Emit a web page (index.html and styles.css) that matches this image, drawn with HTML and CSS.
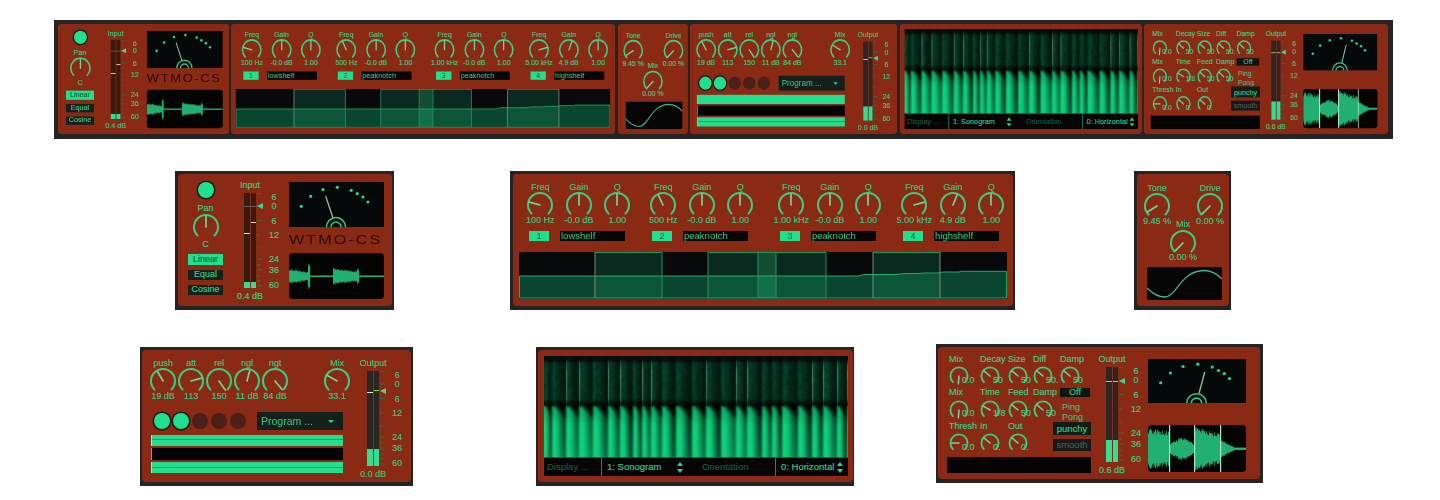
FILE: index.html
```html
<!DOCTYPE html>
<html lang="en">
<head>
<meta charset="utf-8">
<title>WTMO-CS channel strip</title>
<link rel="stylesheet" href="styles.css">
</head>
<body>
<svg class="defs" aria-hidden="true">
  <symbol id="arc" viewBox="0 0 28 28"><path d="M5.51 22.49A12 12 0 1 1 22.49 22.49"/></symbol>
  <symbol id="ticks" viewBox="0 0 10 95"><path d="M1 0.5h4M1 13h5M1 27.5h5M1 42h3M1 55h3M1 66h5M1 72h3M1 77h5M1 83h3M1 88h3M1 93h5"/></symbol>
  <symbol id="updown" viewBox="0 0 6 11"><path d="M3 0L6 4H0ZM3 11L0 7H6Z"/></symbol>
  <symbol id="vu" viewBox="0 0 95 45" preserveAspectRatio="none">
    <rect width="95" height="45"/>
    <g class="vu-dots"><circle cx="12.3" cy="24.3" r="1.6"/><circle cx="21.7" cy="14.3" r="1.6"/><circle cx="34" cy="7.7" r="1.6"/><circle cx="48.3" cy="5.3" r="1.6"/><circle cx="62.3" cy="8.3" r="1.6"/><circle cx="68.3" cy="11.7" r="1.6"/><circle cx="74" cy="15" r="1.6"/><circle cx="79" cy="20" r="1.6"/></g>
    <g class="vu-rings"><circle cx="47" cy="45" r="9.5"/><circle cx="47" cy="45" r="5"/></g>
  </symbol>
</svg>

<div class="strip"></div>

<div class="row row-mid">
  <section class="device dev-amp">
    <div class="panel p-amp" data-name="amp">
      <div class="amp-left">
        <span class="led on big"></span>
        <span class="lbl pan-lbl">Pan</span>
        <span class="pan-mark"></span>
        <svg class="knob" viewBox="0 0 28 28"><use href="#arc"/><line x1="14" y1="14" x2="14" y2="3"/></svg>
        <span class="val pan-val">C</span>
        <span class="btn active">Linear</span>
        <span class="btn">Equal</span>
        <span class="btn">Cosine</span>
      </div>
      <div class="meter meter-in">
        <span class="lbl">Input</span>
        <div class="meter-body">
          <div class="bars"><div class="bar"><i class="fill f-low"></i><i class="peak pk-in1"></i></div><div class="bar"><i class="fill f-low"></i><i class="peak pk-in2"></i></div><i class="zero"></i></div>
          <svg class="ticks"><use href="#ticks"/></svg>
          <span class="marker m-in"></span>
          <div class="scale"><span>6</span><span>0</span><span>6</span><span>12</span><span>24</span><span>36</span><span>60</span></div>
        </div>
        <span class="val">0.4 dB</span>
      </div>
      <div class="amp-right">
        <svg class="vu" viewBox="0 0 95 45"><use href="#vu"/><line x1="36.7" y1="14.3" x2="44" y2="36"/></svg>
        <span class="logo">WTMO-CS</span>
        <canvas class="wave" data-wave="1" width="95" height="46"></canvas>
      </div>
    </div>
  </section>

  <section class="device dev-eq">
    <div class="panel p-eq" data-name="eq">
      <div class="bands">
        <div class="band">
          <div class="knobs">
            <div class="kn"><span class="lbl">Freq</span><svg class="knob" viewBox="0 0 28 28"><use href="#arc"/><line x1="14" y1="14" x2="14" y2="3" transform="rotate(-75 14 14)"/></svg><span class="val">100 Hz</span></div>
            <div class="kn"><span class="lbl">Gain</span><svg class="knob" viewBox="0 0 28 28"><use href="#arc"/><line x1="14" y1="14" x2="14" y2="3"/></svg><span class="val">-0.0 dB</span></div>
            <div class="kn"><span class="lbl">Q</span><svg class="knob" viewBox="0 0 28 28"><use href="#arc"/><line x1="14" y1="14" x2="14" y2="3"/></svg><span class="val">1.00</span></div>
          </div>
          <div class="band-sel"><span class="num">1</span><span class="name">lowshelf</span></div>
        </div>
        <div class="band">
          <div class="knobs">
            <div class="kn"><span class="lbl">Freq</span><svg class="knob" viewBox="0 0 28 28"><use href="#arc"/><line x1="14" y1="14" x2="14" y2="3" transform="rotate(-25 14 14)"/></svg><span class="val">500 Hz</span></div>
            <div class="kn"><span class="lbl">Gain</span><svg class="knob" viewBox="0 0 28 28"><use href="#arc"/><line x1="14" y1="14" x2="14" y2="3"/></svg><span class="val">-0.0 dB</span></div>
            <div class="kn"><span class="lbl">Q</span><svg class="knob" viewBox="0 0 28 28"><use href="#arc"/><line x1="14" y1="14" x2="14" y2="3"/></svg><span class="val">1.00</span></div>
          </div>
          <div class="band-sel"><span class="num">2</span><span class="name">peaknotch</span></div>
        </div>
        <div class="band band-3">
          <div class="knobs">
            <div class="kn"><span class="lbl">Freq</span><svg class="knob" viewBox="0 0 28 28"><use href="#arc"/><line x1="14" y1="14" x2="14" y2="3"/></svg><span class="val">1.00 kHz</span></div>
            <div class="kn"><span class="lbl">Gain</span><svg class="knob" viewBox="0 0 28 28"><use href="#arc"/><line x1="14" y1="14" x2="14" y2="3"/></svg><span class="val">-0.0 dB</span></div>
            <div class="kn"><span class="lbl">Q</span><svg class="knob" viewBox="0 0 28 28"><use href="#arc"/><line x1="14" y1="14" x2="14" y2="3"/></svg><span class="val">1.00</span></div>
          </div>
          <div class="band-sel"><span class="num">3</span><span class="name">peaknotch</span></div>
        </div>
        <div class="band">
          <div class="knobs">
            <div class="kn"><span class="lbl">Freq</span><svg class="knob" viewBox="0 0 28 28"><use href="#arc"/><line x1="14" y1="14" x2="14" y2="3" transform="rotate(75 14 14)"/></svg><span class="val">5.00 kHz</span></div>
            <div class="kn"><span class="lbl">Gain</span><svg class="knob" viewBox="0 0 28 28"><use href="#arc"/><line x1="14" y1="14" x2="14" y2="3" transform="rotate(22 14 14)"/></svg><span class="val">4.9 dB</span></div>
            <div class="kn"><span class="lbl">Q</span><svg class="knob" viewBox="0 0 28 28"><use href="#arc"/><line x1="14" y1="14" x2="14" y2="3"/></svg><span class="val">1.00</span></div>
          </div>
          <div class="band-sel"><span class="num">4</span><span class="name">highshelf</span></div>
        </div>
      </div>
      <svg class="eq" viewBox="0 0 488 47">
        <rect class="eq-bg" width="488" height="47"/>
        <g class="eq-top"><rect x="76" width="67" height="47"/><rect x="189" width="118" height="47"/><rect x="354" width="67" height="47"/></g>
        <path class="eq-fill" d="M.5 24H340L345 22.5H378L385 21.5H400L405 21H418L424 20H440L442 19.3H487.5V46H.5Z"/>
        <g class="eq-low"><rect x="76" y="24" width="67" height="22"/><rect x="189" y="24" width="118" height="22"/><rect x="354" y="22" width="67" height="24"/></g>
        <rect class="eq-sel" x="239" width="18" height="46"/>
        <g class="eq-edge"><path d="M143 .5V46M189 .5V46M239 .5V46M257 .5V46M307 .5V46M76 .5H143M189 .5H307M354 .5H421"/></g>
        <path class="eq-gray" d="M76 0V46M354 0V46M421 0V46"/>
      </svg>
    </div>
  </section>

  <section class="device dev-drive">
    <div class="panel p-drive" data-name="drive">
      <div class="drive-top">
        <div class="kn"><span class="lbl">Tone</span><svg class="knob" viewBox="0 0 28 28"><use href="#arc"/><line x1="14" y1="14" x2="14" y2="3" transform="rotate(-122 14 14)"/></svg><span class="val">9.45 %</span></div>
        <div class="kn"><span class="lbl">Drive</span><svg class="knob" viewBox="0 0 28 28"><use href="#arc"/><line x1="14" y1="14" x2="14" y2="3" transform="rotate(-135 14 14)"/></svg><span class="val">0.00 %</span></div>
      </div>
      <div class="kn drive-mix"><span class="lbl">Mix</span><svg class="knob" viewBox="0 0 28 28"><use href="#arc"/><line x1="14" y1="14" x2="14" y2="3" transform="rotate(-135 14 14)"/></svg><span class="val">0.00 %</span></div>
      <svg class="shaper" viewBox="0 0 75 33"><rect width="75" height="33" rx="2"/><path d="M0 21C6 27 11 30 18 30C30 30 33 4 57 3.5C64 3.5 70 7 75 12"/></svg>
    </div>
  </section>
</div>

<div class="row row-low">
  <section class="device dev-comp">
    <div class="panel p-comp" data-name="comp">
      <div class="comp-left">
        <div class="comp-knobs">
          <div class="kn"><span class="lbl">push</span><svg class="knob" viewBox="0 0 28 28"><use href="#arc"/><line x1="14" y1="14" x2="14" y2="3" transform="rotate(-30 14 14)"/></svg><span class="val">19 dB</span></div>
          <div class="kn"><span class="lbl">att</span><svg class="knob" viewBox="0 0 28 28"><use href="#arc"/><line x1="14" y1="14" x2="14" y2="3" transform="rotate(75 14 14)"/></svg><span class="val">113</span></div>
          <div class="kn"><span class="lbl">rel</span><svg class="knob" viewBox="0 0 28 28"><use href="#arc"/><line x1="14" y1="14" x2="14" y2="3" transform="rotate(145 14 14)"/></svg><span class="val">150</span></div>
          <div class="kn"><span class="lbl">ngl</span><svg class="knob" viewBox="0 0 28 28"><use href="#arc"/><line x1="14" y1="14" x2="14" y2="3" transform="rotate(15 14 14)"/></svg><span class="val">11 dB</span></div>
          <div class="kn"><span class="lbl">ngt</span><svg class="knob" viewBox="0 0 28 28"><use href="#arc"/><line x1="14" y1="14" x2="14" y2="3" transform="rotate(140 14 14)"/></svg><span class="val">84 dB</span></div>
          <div class="kn comp-mix"><span class="lbl">Mix</span><svg class="knob" viewBox="0 0 28 28"><use href="#arc"/><line x1="14" y1="14" x2="14" y2="3" transform="rotate(-60 14 14)"/></svg><span class="val">33.1</span></div>
        </div>
        <div class="comp-ctl">
          <div class="leds"><span class="led on"></span><span class="led on"></span><span class="led"></span><span class="led"></span><span class="led"></span></div>
          <div class="drop"><span>Program ...</span><i class="caret"></i></div>
        </div>
        <div class="gr"></div>
        <div class="gr gr-off"></div>
        <div class="gr"></div>
      </div>
      <div class="meter meter-out">
        <span class="lbl">Output</span>
        <div class="meter-body">
          <div class="bars"><div class="bar"><i class="fill f-a"></i><i class="peak pk-out1"></i></div><div class="bar"><i class="fill f-a"></i><i class="peak pk-out2"></i></div></div>
          <svg class="ticks"><use href="#ticks"/></svg>
          <span class="marker m-out"></span>
          <div class="scale"><span>6</span><span>0</span><span>6</span><span>12</span><span>24</span><span>36</span><span>60</span></div>
        </div>
        <span class="val">0.0 dB</span>
      </div>
    </div>
  </section>

  <section class="device dev-sono">
    <div class="panel p-sono" data-name="sono">
      <canvas class="sonogram" width="304" height="101"></canvas>
      <div class="sono-bar">
        <span class="seg seg-a dim">Display ...</span>
        <span class="seg seg-b">1: Sonogram<svg class="updown"><use href="#updown"/></svg></span>
        <span class="seg seg-c dim">Orientation</span>
        <span class="seg seg-d">0: Horizontal<svg class="updown"><use href="#updown"/></svg></span>
      </div>
    </div>
  </section>

  <section class="device dev-fx">
    <div class="panel p-fx" data-name="fx">
      <div class="fx-left">
        <div class="kgrid">
          <div class="kc"><span class="lbl">Mix</span><div class="kd"><svg class="knob" viewBox="0 0 28 28"><use href="#arc"/><line x1="14" y1="14" x2="14" y2="3" transform="rotate(-175 14 14)"/></svg><span class="kv">0.0</span></div></div>
          <div class="kc"><span class="lbl">Decay</span><div class="kd"><svg class="knob" viewBox="0 0 28 28"><use href="#arc"/><line x1="14" y1="14" x2="14" y2="3" transform="rotate(-50 14 14)"/></svg><span class="kv">50</span></div></div>
          <div class="kc"><span class="lbl">Size</span><div class="kd"><svg class="knob" viewBox="0 0 28 28"><use href="#arc"/><line x1="14" y1="14" x2="14" y2="3" transform="rotate(-50 14 14)"/></svg><span class="kv">50</span></div></div>
          <div class="kc"><span class="lbl">Diff</span><div class="kd"><svg class="knob" viewBox="0 0 28 28"><use href="#arc"/><line x1="14" y1="14" x2="14" y2="3" transform="rotate(-50 14 14)"/></svg><span class="kv">50.</span></div></div>
          <div class="kc"><span class="lbl">Damp</span><div class="kd"><svg class="knob" viewBox="0 0 28 28"><use href="#arc"/><line x1="14" y1="14" x2="14" y2="3" transform="rotate(-50 14 14)"/></svg><span class="kv">50</span></div></div>

          <div class="kc"><span class="lbl">Mix</span><div class="kd"><svg class="knob" viewBox="0 0 28 28"><use href="#arc"/><line x1="14" y1="14" x2="14" y2="3" transform="rotate(-175 14 14)"/></svg><span class="kv">0.0</span></div></div>
          <div class="kc"><span class="lbl">Time</span><div class="kd"><svg class="knob" viewBox="0 0 28 28"><use href="#arc"/><line x1="14" y1="14" x2="14" y2="3" transform="rotate(-60 14 14)"/></svg><span class="kv">1/8</span></div></div>
          <div class="kc"><span class="lbl">Feed</span><div class="kd"><svg class="knob" viewBox="0 0 28 28"><use href="#arc"/><line x1="14" y1="14" x2="14" y2="3" transform="rotate(-50 14 14)"/></svg><span class="kv">50</span></div></div>
          <div class="kc"><span class="lbl">Damp</span><div class="kd"><svg class="knob" viewBox="0 0 28 28"><use href="#arc"/><line x1="14" y1="14" x2="14" y2="3" transform="rotate(-50 14 14)"/></svg><span class="kv">50</span></div></div>
          <div class="kc kc-ping"><span class="btn btn-off">Off</span><span class="ping">Ping<br>Pong</span></div>

          <div class="kc"><span class="lbl">Thresh</span><div class="kd"><svg class="knob" viewBox="0 0 28 28"><use href="#arc"/><line x1="14" y1="14" x2="14" y2="3" transform="rotate(-90 14 14)"/></svg><span class="kv">0.0</span></div></div>
          <div class="kc"><span class="lbl">In</span><div class="kd"><svg class="knob" viewBox="0 0 28 28"><use href="#arc"/><line x1="14" y1="14" x2="14" y2="3" transform="rotate(-50 14 14)"/></svg><span class="kv">0.</span></div></div>
          <div class="kc"><span class="lbl">Out</span><div class="kd"><svg class="knob" viewBox="0 0 28 28"><use href="#arc"/><line x1="14" y1="14" x2="14" y2="3" transform="rotate(-50 14 14)"/></svg><span class="kv">0.</span></div></div>
          <div class="kc-mode"><span class="btn btn-mode">punchy</span><span class="btn btn-mode dim">smooth</span></div>
        </div>
        <div class="fx-box"></div>
      </div>
      <div class="meter meter-fx">
        <span class="lbl">Output</span>
        <div class="meter-body">
          <div class="bars"><div class="bar"><i class="fill f-b"></i><i class="peak pk-fx"></i></div><div class="bar"><i class="fill f-b"></i><i class="peak pk-fx"></i></div></div>
          <svg class="ticks"><use href="#ticks"/></svg>
          <span class="marker m-fx"></span>
          <div class="scale"><span>6</span><span>0</span><span>6</span><span>12</span><span>24</span><span>36</span><span>60</span></div>
        </div>
        <span class="val">0.6 dB</span>
      </div>
      <div class="fx-right">
        <svg class="vu" viewBox="0 0 95 45" preserveAspectRatio="none"><use href="#vu"/><line x1="55" y1="13.3" x2="49.5" y2="35"/></svg>
        <canvas class="wave" data-wave="2" width="98" height="47"></canvas>
      </div>
    </div>
  </section>
</div>
<script src="script.js"></script>
</body>
</html>
```
FILE: styles.css
```css
:root {
  --red: #8b2a14;
  --edge: #242424;
  --green: #38cf85;
  --bright: #1fe08c;
  --dim: #1c5a40;
}
* { box-sizing: border-box; }
body {
  margin: 0;
  width: 1440px;
  height: 500px;
  overflow: hidden;
  background: #fff;
  font-family: "Liberation Sans", Arial, sans-serif;
  font-size: 9px;
  line-height: 9px;
  color: var(--green);
}
.defs { position: absolute; width: 0; height: 0; }

.strip, .device { filter: blur(.5px); }

.strip {
  display: flex;
  justify-content: space-between;
  width: 1339px;
  height: 119px;
  margin: 20px 0 0 54px;
  padding: 4px 5px 5px 4px;
  background: var(--edge);
}
.slot { flex: none; height: 110px; }
.slot .panel { transform-origin: 0 0; transform: scale(var(--sx), .833); }
.slot-amp { width: 171px; --sx: .8; }
.slot-eq { width: 384px; --sx: .768; }
.slot-drive { width: 70px; --sx: .76; }
.slot-comp { width: 207px; --sx: .77; }
.slot-sono { width: 242px; --sx: .768; }
.slot-fx { width: 244px; --sx: .758; }

.row { display: flex; align-items: flex-start; }
.row-mid { margin-top: 32px; padding-left: 175px; }
.row-low { margin-top: 34px; padding-left: 140px; }
.dev-eq { margin-left: 116px; }
.dev-drive { margin-left: 119px; }
.dev-comp, .dev-sono { margin-top: 3px; }
.dev-sono { margin-left: 123px; }
.dev-fx { margin-left: 82px; }

.device { flex: none; padding: 3px 2px 4px 3px; background: var(--edge); }
.dev-comp { padding-left: 2px; }
.dev-sono { padding: 3px 1px 4px 2px; }
.dev-fx { padding: 3px 3px 4px 2px; }
.panel { height: 132px; background: var(--red); border-radius: 4px; }
.p-amp { width: 214px; display: flex; }
.p-eq { width: 500px; padding: 8.5px 0 0 6px; }
.p-drive { width: 92px; padding: 9.5px 5px 0 6px; }
.p-comp { width: 269px; display: flex; }
.p-sono { width: 315px; padding: 6px 5px 0 6px; }
.p-fx { width: 322px; display: flex; padding-top: 7.5px; }

.lbl, .val, .kv { display: flex; justify-content: center; white-space: nowrap; height: 9px; }
.lbl, .val, .kv, .scale span { -webkit-text-stroke: .15px currentColor; }

.kn { display: flex; flex-direction: column; align-items: center; width: 28px; flex: none; }
.knob { display: block; width: 28px; height: 28px; flex: none; fill: none; stroke: var(--green); stroke-width: 2; stroke-linecap: round; }
.knob line { stroke: #6fd49b; stroke-width: 1.7; }
.kn .knob { margin-top: -.5px; }
.kn .val { margin-top: -3.5px; }

.btn {
  display: flex; align-items: center; justify-content: center;
  height: 11px; background: #16201c; color: var(--green);
  font-size: 9px; white-space: nowrap; -webkit-text-stroke: .15px currentColor;
}
.btn.active { background: var(--bright); color: #0c5b3a; }
.led { display: block; width: 16px; height: 16px; border-radius: 50%; background: #4a2018; flex: none; }
.led.on { background: var(--bright); box-shadow: 0 0 0 1.5px #1c1512; }

/* amp */
.amp-left { width: 35px; margin: 8px 0 0 10px; display: flex; flex-direction: column; align-items: center; flex: none; }
.pan-lbl { margin-top: 5.5px; }
.pan-mark { width: 0; height: 0; margin-top: 1px; border: 3px solid transparent; border-top: 4px solid #2a1a14; border-bottom: 0; }
.amp-left .knob { margin-top: -5px; }
.pan-val { margin-top: -.5px; }
.amp-left .btn { width: 35px; }
.amp-left .pan-val + .btn { margin-top: 4.5px; }
.amp-left .btn + .btn { margin-top: 5px; height: 10px; }
.meter-in { margin-left: 21px; margin-top: 6.5px; }
.amp-right { margin: 8px 0 0 7px; width: 95px; flex: none; }
.vu { display: block; width: 95px; height: 45px; fill: #050909; }
.vu use { stroke: none; }
.vu line { stroke: #8fbfa5; stroke-width: 1.3; }
.vu-dots { fill: #31d487; }
.vu-rings { fill: none; stroke: #35c782; stroke-width: 1.6; }
.logo {
  display: block; height: 10px; margin-top: 8px;
  font-size: 13px; line-height: 10px; letter-spacing: 1.6px; white-space: nowrap;
  color: #2a0d05; transform: scaleX(1.25); transform-origin: 0 50%;
}
.wave { display: block; width: 95px; height: 46px; margin-top: 8px; border-radius: 4px; background: #040404; }

/* meters */
.meter { flex: none; width: 38px; }
.meter > .lbl, .meter > .val { width: 12px; }
.meter > .val { margin-top: 4px; }
.meter-body { position: relative; display: flex; height: 95px; margin-top: 3.5px; }
.bars { position: relative; display: flex; gap: 1px; width: 12px; height: 95px; flex: none; }
.bar { position: relative; flex: 1; background: #2a2623; }
.meter-in .bar { background: #3a1a10; }
.fill { position: absolute; left: 0; right: 0; bottom: 0; background: #35dd90; }
.f-low { height: 6px; }
.f-a { height: 17px; }
.f-b { height: 22px; }
.peak { position: absolute; left: 0; right: 0; height: 1px; background: #e6e6d8; }
.pk-in1 { top: 40px; }
.pk-in2 { top: 29px; }
.pk-out1 { top: 21px; }
.pk-out2 { top: 19px; background: #9fc85a; }
.pk-fx { top: 14px; background: #c8c85a; }
.zero { position: absolute; left: 0; width: 16px; top: 13px; height: 1px; background: #6a5a50; }
.ticks { display: block; width: 10px; height: 95px; flex: none; fill: none; stroke: #2f6e48; stroke-width: 1; }
.marker {
  position: absolute; left: 13px; top: 10px; width: 0; height: 0;
  border: 3.5px solid transparent; border-right: 6px solid #3fd88f; border-left: 0;
}
.scale {
  display: grid; grid-template-rows: 9px 14.5px 14.5px 24px 11px 15px 9px;
  width: 16px; height: 95px; flex: none; text-align: center;
}
.scale span { height: 9px; }

/* eq */
.bands { display: flex; margin-left: 2px; }
.band + .band { margin-left: 7.5px; }
.band-3 { margin-left: 12.5px !important; }
.band { width: 115.5px; flex: none; }
.knobs { display: flex; }
.knobs .kn { width: 38.5px; }
.band-sel { display: flex; margin-top: 6.5px; height: 10px; }
.num {
  display: flex; align-items: center; justify-content: center;
  width: 20px; margin-left: 8px; background: var(--bright); color: #0c6b44; font-size: 9px;
}
.name { width: 65px; margin-left: 11px; padding-left: 1px; background: #060606; line-height: 10px; font-size: 9.5px; }
.eq { display: block; width: 488px; height: 47px; margin-top: 11px; }
.eq-bg { fill: #07090b; }
.eq-top rect { fill: #0a2a20; }
.eq-fill { fill: #0b4630; stroke: #23a86c; stroke-width: 1; }
.eq-low rect { fill: #1bc47f; opacity: .13; }
.eq-sel { fill: #2fd68a; opacity: .2; }
.eq-edge path { fill: none; stroke: #1f9560; stroke-width: 1; }
.eq-gray { fill: none; stroke: #7c8a80; stroke-width: 1; }

/* drive */
.drive-top { display: flex; justify-content: space-between; }
.drive-mix { margin: -5.5px 0 0 26px; }
.shaper { display: block; width: 75px; height: 33px; margin: 4.5px 0 0 4px; fill: #050505; }
.shaper path { fill: none; stroke: #45b585; stroke-width: 1.3; }

/* comp */
.comp-left { width: 192px; margin: 8.5px 0 0 9px; flex: none; }
.comp-knobs { display: flex; margin-left: -2px; }
.comp-mix { margin-left: 34px; }
.comp-ctl { display: flex; align-items: center; justify-content: space-between; height: 18px; margin: 11.5px 0 0 3px; }
.leds { display: flex; gap: 3px; }
.drop {
  display: flex; align-items: center; justify-content: space-between;
  width: 86px; height: 18px; padding: 0 9px 0 4px; background: #14201b;
  font-size: 10.5px; line-height: 18px;
}
.caret { width: 0; height: 0; border: 3px solid transparent; border-top: 3px solid var(--green); border-bottom: 0; }
.gr {
  height: 11px; margin-top: 2px;
  background: linear-gradient(#25de8d 0 4.5px, #8f6a50 4.5px 5.5px, #25de8d 5.5px);
  border-left: 1px solid #c8d8c8;
}
.comp-ctl + .gr { margin-top: 5px; }
.gr-off { background: #030303; height: 12px; border-left-color: #b87; }
.meter-out { margin: 8.5px 0 0 24px; }
.m-out { top: 17px; }
.m-in { top: 9.5px; }

/* sonogram */
.sonogram { display: block; width: 304px; height: 101px; background: #041; }
.sono-bar { display: flex; height: 18px; margin-top: 1px; background: #050505; font-size: 9.5px; line-height: 18px; -webkit-text-stroke: .15px currentColor; }
.seg { display: flex; align-items: center; white-space: nowrap; flex: none; }
.dim { color: var(--dim); }
.seg-a { width: 57px; padding-left: 3px; }
.seg-b { width: 101px; padding-left: 5px; border-left: 1px solid #1f8a5a; justify-content: flex-start; }
.seg-c { width: 73px; }
.seg-d { width: 73px; padding-left: 5px; border-left: 1px solid #1f8a5a; }
.updown { width: 6px; height: 11px; fill: var(--green); flex: none; }
.seg-b .updown { margin-left: 16px; }
.seg-d .updown { margin-left: 3px; }

/* fx */
.fx-left { width: 144px; margin-left: 9px; flex: none; }
.kgrid { display: grid; grid-template-columns: 31px 28px 25px 27px 31px; grid-auto-rows: 33.5px; margin-left: 2px; width: 142px; }
.kc .lbl { justify-content: flex-start; }
.kd { position: relative; width: 20px; height: 20px; margin-top: 2.5px; }
.kd .knob { width: 20px; height: 20px; stroke-width: 2.6; }
.kd .knob line { stroke-width: 2.2; }
.kv { position: absolute; left: 13px; top: 9.5px; }
.kc-ping { display: flex; flex-direction: column; }
.btn-off { width: 30px; height: 9px; background: #0d1512; }
.ping { margin: 5px 0 0 2px; line-height: 10px; white-space: nowrap; }
.kc-mode { grid-column: 4 / 6; display: flex; flex-direction: column; align-items: flex-end; gap: 4px; height: 29px; padding-right: 0; }
.btn-mode { width: 38px; height: 13px; background: #131c18; font-size: 9.5px; }
.btn-mode.dim { height: 12px; color: #4b5a50; background: #17191a; }
.fx-box { height: 16px; margin-top: 2px; background: #040404; }
.meter-fx { margin: 0 0 0 15px; }
.m-fx { top: 11px; }
.fx-right { width: 98px; margin: 4.5px 0 0 4px; flex: none; }
.fx-right .vu { width: 98px; height: 44px; }
.fx-right .wave { width: 98px; height: 47px; margin-top: 22px; }
```
FILE: script.js
```js
// Seeded noise so the drawn displays are stable between runs.
function rng(seed) {
  let s = seed;
  return () => (s = (s * 16807) % 2147483647) / 2147483647;
}

// Rack strip along the top: the same six panels at a smaller size.
const strip = document.querySelector('.strip');
document.querySelectorAll('.device .panel').forEach((panel) => {
  const slot = document.createElement('div');
  slot.className = 'slot slot-' + panel.dataset.name;
  slot.appendChild(panel.cloneNode(true));
  strip.appendChild(slot);
});

function drawSonogram(canvas) {
  const ctx = canvas.getContext('2d');
  const W = canvas.width, H = canvas.height;
  const img = ctx.createImageData(W, H);
  const r = rng(4711);
  const hits = [];
  for (let x = 0; x < W; ) {
    hits.push(x);
    x += 8 + Math.floor(r() * 9);
  }
  const streak = hits.map(() => r());
  const depth = hits.map(() => 0.35 + r() * 0.3);
  const colNoise = Array.from({ length: W }, () => r());
  let h = 0;
  for (let x = 0; x < W; x++) {
    while (h + 1 < hits.length && hits[h + 1] <= x) h++;
    const t = x - hits[h];
    const span = (hits[h + 1] || W + 4) - hits[h];
    const u = t / span;
    const profile = 0.5 + 0.5 * Math.cos(Math.max(0, u - 0.15) / 0.85 * Math.PI * 1.15 - 0.1);
    for (let y = 0; y < H; y++) {
      const n = r();
      let R = 0, G = 0, B = 0;
      if (y < 50) {
        const dark = y > 42 ? Math.max(0.15, 1 - (y - 42) / 8) : 1;
        const v = (0.22 + 0.42 * n + 0.22 * colNoise[x]) * dark * Math.max(0.35, 1 - u * 0.8);
        G = 125 * v; R = 12 * v; B = 78 * v;
        if (y < 6) { R *= 0.35; G *= 0.35; B *= 0.35; }
      } else {
        const edge = 52 + u * 14;
        const low = Math.max(0, y / H - 0.55) * 0.9;
        let v = 1 - (1 - profile) * (depth[h] + 0.2 - low * 0.5);
        if (y < edge) v *= Math.max(0.05, 1 - (edge - y) / 9);
        else v *= Math.min(1, 0.85 + (y - 56) / 90);
        v *= 0.97 + 0.03 * n;
        R = 16 * v; G = 212 * v; B = 126 * v;
      }
      const p = (y * W + x) * 4;
      img.data[p] = R; img.data[p + 1] = G; img.data[p + 2] = B; img.data[p + 3] = 255;
    }
  }
  ctx.putImageData(img, 0, 0);
  const soft = document.createElement('canvas');
  soft.width = W; soft.height = H;
  soft.getContext('2d').drawImage(canvas, 0, 0);
  ctx.filter = 'blur(1.2px)';
  ctx.drawImage(soft, 0, 0);
  ctx.filter = 'none';
  // Pale transient streaks through the high band.
  hits.forEach((x, i) => {
    if (streak[i] < 0.5) return;
    const g = ctx.createLinearGradient(0, 4, 0, 52);
    g.addColorStop(0, 'rgba(170,200,185,.1)');
    g.addColorStop(0.25, 'rgba(170,200,185,.42)');
    g.addColorStop(0.8, 'rgba(170,200,185,.3)');
    g.addColorStop(1, 'rgba(170,200,185,0)');
    ctx.fillStyle = g;
    ctx.fillRect(x, 4, 1.2, 48);
  });
}

function amp1(x) {
  if (x < 19) return 7 - x * 0.15;
  if (x < 21) return 13;
  if (x < 44) return 0.5;
  if (x < 68) return 8 - (x - 44) * 0.14;
  if (x < 70) return 8;
  return 0.5;
}
function amp2(x) {
  if (x < 21) return 20 - x * 0.1;
  if (x < 46) return 4 + 7 * Math.sin((x - 21) / 25 * Math.PI);
  if (x < 72) return 22 - (x - 46) * 0.28;
  if (x < 88) return Math.max(1, 9 - (x - 72) * 0.55);
  return 1;
}

function drawWave(canvas) {
  const ctx = canvas.getContext('2d');
  const W = canvas.width, H = canvas.height;
  const mid = H / 2;
  const two = canvas.dataset.wave === '2';
  const r = rng(two ? 991 : 317);
  for (let x = 0; x < W; x += 0.5) {
    const a = (two ? amp2(x) : amp1(x)) * (0.7 + 0.3 * r());
    ctx.fillStyle = '#2bd88a';
    ctx.fillRect(x, mid - a, 0.6, a * 2 + 0.6);
  }
  if (two) {
    ctx.fillStyle = '#a8e8c8';
    [21, 46, 72].forEach((x) => ctx.fillRect(x, 0, 1.2, H));
  }
}

document.querySelectorAll('.sonogram').forEach(drawSonogram);
document.querySelectorAll('.wave').forEach(drawWave);
```
